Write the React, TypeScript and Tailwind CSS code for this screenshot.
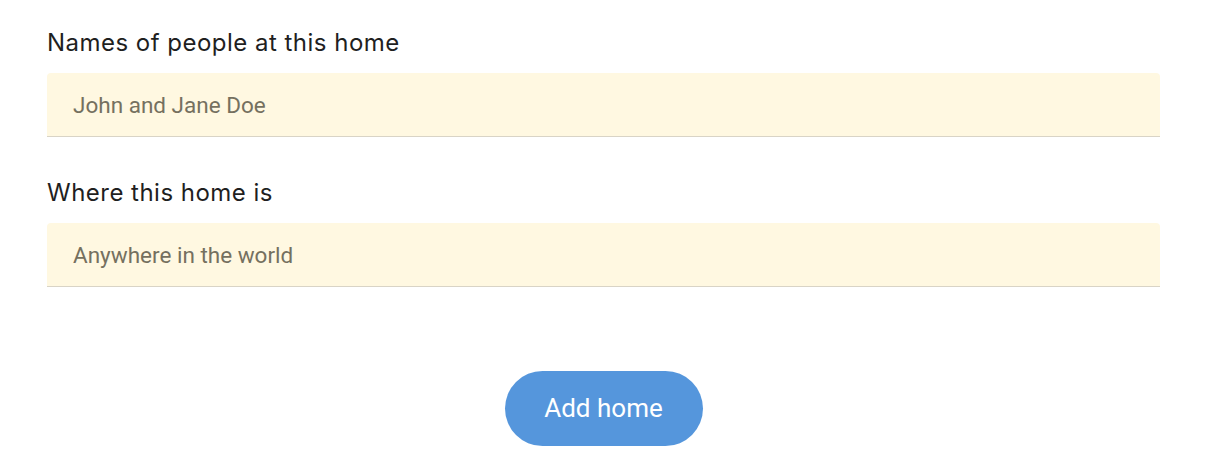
import React from 'react';

const Field: React.FC<{ label: string; placeholder: string }> = ({ label, placeholder }) => (
    <label className="block">
        <span className="block text-[24px] leading-[30px] tracking-[0.02em] text-[#1f1f1f] font-['Inter',sans-serif]">{label}</span>
        <input
            type="text"
            placeholder={placeholder}
            className="mt-[15px] block w-full h-[64px] px-[26px] rounded-t-[4px] bg-[#fff8e1] border-b border-[#d9d4c6] text-[22.5px] text-[#333] placeholder:text-[#75705f] font-['Roboto',sans-serif] outline-none"
        />
    </label>
);

export default function App() {
    return (
        <div className="w-[1220px] h-[472px] bg-white pl-[47px] pr-[60px] pt-[28px]">
            <div className="flex flex-col gap-[41px]">
                <Field label="Names of people at this home" placeholder="John and Jane Doe" />
                <Field label="Where this home is" placeholder="Anywhere in the world" />
            </div>
            <div className="flex justify-center mt-[84px]">
                <button className="w-[198px] h-[75px] rounded-full bg-[#5596dc] text-white text-[26px] font-['Roboto',sans-serif]">
                    Add home
                </button>
            </div>
        </div>
    );
}
